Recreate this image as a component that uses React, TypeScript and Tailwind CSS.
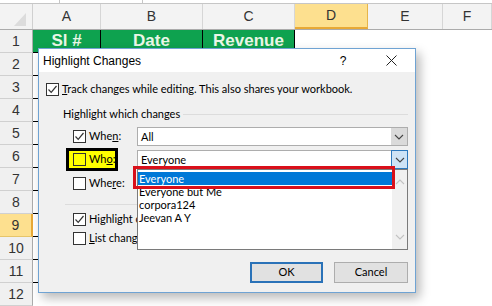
import React from "react";

const cols = [
  { label: "A", w: "w-[68px]" },
  { label: "B", w: "w-[102px]" },
  { label: "C", w: "w-[92px]" },
  { label: "D", w: "w-[73px]", active: true },
  { label: "E", w: "w-[75px]" },
  { label: "F", w: "flex-1" },
];

const head = ["Sl #", "Date", "Revenue"];

function Check({ on, yellow }: { on?: boolean; yellow?: boolean }) {
  return (
    <span
      className={`w-[13px] h-[13px] shrink-0 border border-[#333] flex items-center justify-center ${
        yellow ? "bg-[#ffff00]" : "bg-white"
      }`}
    >
      {on && (
        <svg width="11" height="11" viewBox="0 0 11 11">
          <path d="M1.5 5.5 L4.2 8.3 L9.5 2" fill="none" stroke="#333" strokeWidth="1.2" />
        </svg>
      )}
    </span>
  );
}

function Chevron({ up, color = "#444" }: { up?: boolean; color?: string }) {
  return (
    <svg width="10" height="6" viewBox="0 0 10 6">
      <path d={up ? "M1 5 L5 1 L9 5" : "M1 1 L5 5 L9 1"} fill="none" stroke={color} strokeWidth="1.1" />
    </svg>
  );
}

function Combo({ value, hot }: { value: string; hot?: boolean }) {
  return (
    <div className="ml-auto w-[271px] h-[19px] flex border border-[#adadad] bg-white">
      <span className="flex-1 pl-[3px] leading-[17px]">{value}</span>
      <span
        className={`flex items-center justify-center ${
          hot ? "bg-[#cde3f6] border border-[#2c78bd] -my-px -mr-px h-[19px] w-[17px]" : "w-[16px] h-full bg-[#dadada]"
        }`}
      >
        <Chevron />
      </span>
    </div>
  );
}

function Dialog() {
  return (
    <div className="absolute left-[38px] top-[48px] w-[378px] h-[245px] flex flex-col border border-[#6fa3d3] bg-[#f0f0f0] shadow-[4px_5px_10px_rgba(0,0,0,0.28)] text-[11px] text-black font-['Lato','Liberation_Sans',sans-serif]">
      <div className="h-[23px] bg-white flex items-center pl-[4px] text-[12px] font-['Liberation_Sans',Arial,sans-serif]">
        <span className="flex-1">Highlight Changes</span>
        <span className="w-[10px] text-center mr-[38px]">?</span>
        <svg width="11" height="11" viewBox="0 0 11 11" className="mr-[18px]">
          <path d="M0.5 0.5 L10.5 10.5 M10.5 0.5 L0.5 10.5" stroke="#222" strokeWidth="1" />
        </svg>
      </div>

      <div className="relative flex-1 flex flex-col pr-[7px]">
        <div className="mt-[11px] pl-[7px] h-[13px] flex items-center gap-[3px]">
          <Check on />
          <span>
            <u>T</u>rack changes while editing. This also shares your workbook.
          </span>
        </div>

        <div className="mt-[11px] pl-[24px] h-[14px] flex items-center gap-[3px]">
          <span>Highlight which changes</span>
          <span className="flex-1 h-px bg-[#dcdcdc]" />
        </div>

        <div className="mt-[6px] pl-[34px] h-[19px] flex items-center">
          <Check on />
          <span className="ml-[3px]">
            Whe<u>n</u>:
          </span>
          <Combo value="All" />
        </div>

        <div className="mt-[4px] pl-[27px] h-[19px] flex items-center">
          <span className="h-[23px] w-[52px] shrink-0 border-[3px] border-black bg-[#ffff00] flex items-center pl-[4px] gap-[3px]">
            <Check yellow />
            <span>
              Wh<u>o</u>:
            </span>
          </span>
          <Combo value="Everyone" hot />
        </div>

        <div className="mt-[5px] pl-[34px] h-[19px] flex items-center">
          <Check />
          <span className="ml-[3px]">
            Whe<u>r</u>e:
          </span>
          <Combo value="" />
        </div>

        <div className="mt-[11px] ml-[26px] h-px bg-[#dcdcdc]" />

        <div className="mt-[8px] pl-[34px] h-[13px] flex items-center gap-[3px]">
          <Check on />
          <span className="w-[48px] overflow-hidden whitespace-nowrap">
            Highlight changes on <u>s</u>creen
          </span>
        </div>

        <div className="mt-[6px] pl-[34px] h-[13px] flex items-center gap-[3px]">
          <Check />
          <span className="w-[48px] overflow-hidden whitespace-nowrap">
            <u>L</u>ist changes on a new sheet
          </span>
        </div>

        <div className="mt-[17px] flex justify-end gap-[11px]">
          <button className="w-[73px] h-[21px] border-2 border-[#2a72b8] bg-[#e1e1e1]">OK</button>
          <button className="w-[74px] h-[21px] border border-[#adadad] bg-[#e1e1e1]">Cancel</button>
        </div>

        <div className="absolute left-[98px] top-[97px] w-[271px] h-[81px] border border-[#7a7a7a] bg-white flex">
          <div className="flex-1 pt-[2px] flex flex-col">
            {["Everyone", "Everyone but Me", "corpora124", "Jeevan A Y"].map((t, i) => (
              <div
                key={t}
                className={`h-[13px] leading-[13px] pl-[1px] ${i === 0 ? "bg-[#0078d7] text-white" : ""}`}
              >
                {t}
              </div>
            ))}
          </div>
          <div className="w-[15px] bg-[#f0f0f0] flex flex-col items-center justify-between py-[9px]">
            <Chevron up color="#c2c2c2" />
            <Chevron color="#c2c2c2" />
          </div>
        </div>

        <div className="absolute left-[94px] top-[94px] w-[262px] h-[23px] border-[3px] border-[#d9101a]" />
      </div>
    </div>
  );
}

export default function App() {
  return (
    <div className="relative w-[492px] h-[306px] overflow-hidden bg-white font-['Liberation_Sans',Arial,sans-serif]">
      <div className="h-[4px] border-b border-[#c6c6c6] flex">
        <span className="w-[60px] border-r border-[#c6c6c6]" />
        <span className="w-[83px] border-r border-[#c6c6c6]" />
      </div>

      <div className="h-[26px] flex bg-[#f3f3f3] border-b border-[#ababab] text-[14px] text-[#333]">
        <div className="w-[33px] shrink-0 border-r border-[#d0d0d0] flex items-end justify-end pr-[6px] pb-[3px]">
          <svg width="12" height="13" viewBox="0 0 12 13">
            <polygon points="12,0 12,13 0,13" fill="#dcdcdc" />
          </svg>
        </div>
        {cols.map((c) => (
          <div
            key={c.label}
            className={`${c.w} shrink-0 flex items-center justify-center border-r ${
              c.active ? "bg-[#fde08f] border-[#e6b54a] border-b-2 border-b-[#e8a936]" : "border-[#d6d6d6]"
            }`}
          >
            {c.label}
          </div>
        ))}
      </div>

      {Array.from({ length: 12 }, (_, r) => r + 1).map((n) => (
        <div key={n} className="h-[23px] flex">
          <div
            className={`w-[33px] shrink-0 flex items-center justify-center text-[14px] text-[#333] border-b ${
              n === 9
                ? "bg-[#fde08f] border-[#e6c56a] border-r-2 border-r-[#e8a936]"
                : "bg-[#f0f0f0] border-[#d0d0d0] border-r border-r-[#ababab]"
            }`}
          >
            {n}
          </div>
          {cols.slice(0, 3).map((c, i) => (
            <div
              key={c.label}
              className={`${c.w} shrink-0 flex items-center justify-center ${
                n <= 11 ? "border-r border-b border-black" : ""
              } ${n === 1 ? "bg-[#0ea24f] text-[#eaf6e6] text-[17px] font-bold" : ""}`}
            >
              {n === 1 ? head[i] : ""}
            </div>
          ))}
        </div>
      ))}

      <Dialog />
    </div>
  );
}
